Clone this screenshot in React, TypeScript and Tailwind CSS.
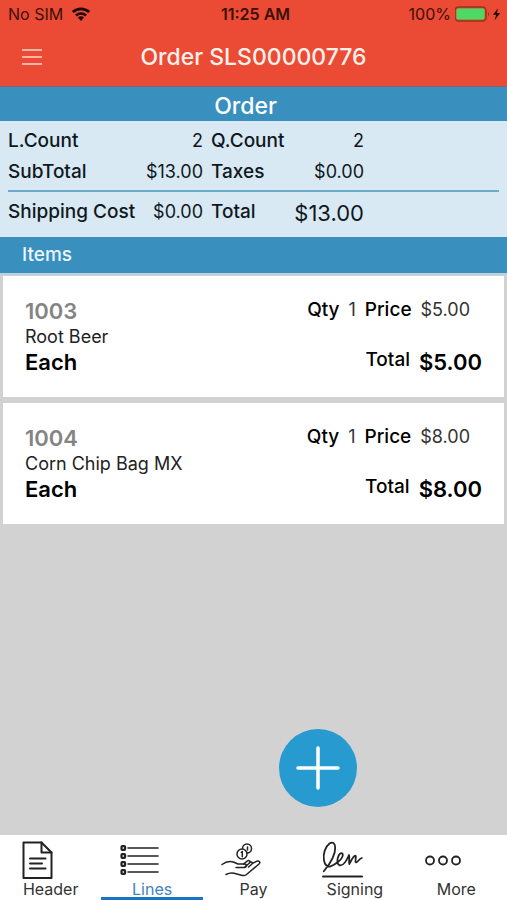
import { useState } from 'react';
import clsx from 'clsx';

const lines = [
  { code: '1003', name: 'Root Beer', unit: 'Each', qty: 1, price: 5 },
  { code: '1004', name: 'Corn Chip Bag MX', unit: 'Each', qty: 1, price: 8 },
]

const money = (value: number) => `$${value.toFixed(2)}`

function StatusBar() {
  return (
    <div className="grid h-7 grid-cols-3 items-center pl-2 pr-1 text-base text-[#3d0f0a]">
      <div className="flex items-center gap-2">
        <span>No SIM</span>
        <svg viewBox="0 0 20 15" className="h-4 w-5" fill="none" aria-hidden="true">
          <path d="M1.8 5.6a12 12 0 0 1 16.4 0" stroke="#1f0705" strokeWidth="2.7" />
          <path d="M4.9 9a7.4 7.4 0 0 1 10.2 0" stroke="#1f0705" strokeWidth="2.5" />
          <path d="M6.9 11.1a4.4 4.4 0 0 1 6.2 0L10 14.4z" fill="#1f0705" />
        </svg>
      </div>
      <span className="whitespace-nowrap text-center font-semibold">11:25 AM</span>
      <div className="flex items-center justify-end gap-1">
        <span>100%</span>
        <svg viewBox="0 0 48 18" className="h-[18px] w-12" aria-hidden="true">
          <rect x="0" y="2" width="31" height="14" rx="3.5" fill="none" stroke="#8a3a1c" strokeWidth="1.5" />
          <rect x="1.5" y="3.5" width="28" height="11" rx="2" fill="#4cd964" />
          <path d="M33 7c1.6.5 1.6 3.500 0 4z" fill="#8a3a1c" />
          <path d="M43 3.200 38 9.800h3.200l-1.600 5.400 5.600-7.200h-3.400z" fill="#1f0705" />
        </svg>
      </div>
    </div>
  )
}

function Summary() {
  return (
    <section className="bg-[#d8e9f3] px-2 pb-2 text-lg leading-[31px] text-[#10181d]">
      <dl className="grid grid-cols-[auto_68px_74px_71px] justify-start gap-x-2 pt-1">
        <dt className="w-[119px] text-[19px] font-medium">L.Count</dt>
        <dd className="text-right">2</dd>
        <dt className="text-[19px] font-medium">Q.Count</dt>
        <dd className="text-right">2</dd>
        <dt className="w-[119px] text-[19px] font-medium">SubTotal</dt>
        <dd className="text-right">$13.00</dd>
        <dt className="text-[19px] font-medium">Taxes</dt>
        <dd className="text-right">$0.00</dd>
      </dl>
      <hr className="mt-[3px] border-0 border-t-2 border-[#6cabc9]" />
      <dl className="grid grid-cols-[auto_60px_60px_85px] justify-start gap-x-2 pt-1">
        <dt className="w-[127px] whitespace-nowrap text-[19px] font-medium">Shipping Cost</dt>
        <dd className="text-right">$0.00</dd>
        <dt className="text-[19px] font-medium">Total</dt>
        <dd className="pt-0.5 text-right text-[22px]">$13.00</dd>
      </dl>
    </section>
  )
}

function LineCard({ item }: { item: any }) {
  return (
    <li className="flex h-[121px] justify-between bg-white px-[22px] pt-[21px] text-lg text-black">
      <div>
        <p className="text-[22px] font-semibold leading-7 text-[#848484]">{item.code}</p>
        <p className="leading-6 text-[#222222]">{item.name}</p>
        <p className="text-[22px] font-semibold leading-[26px]">{item.unit}</p>
      </div>
      <div className="flex flex-col items-end gap-6 leading-[26px]">
        <div className="flex gap-[9px] pr-3">
          <span className="text-[19px] font-medium">Qty</span>
          <span className="text-[#333333]">{item.qty}</span>
          <span className="text-[19px] font-medium">Price</span>
          <span className="text-[#333333]">{money(item.price)}</span>
        </div>
        <div className="flex gap-[9px]">
          <span className="text-[19px] font-medium">Total</span>
          <span className="pt-0.5 text-[22px] font-semibold">{money(item.qty * item.price)}</span>
        </div>
      </div>
    </li>
  )
}

const tabs = [
  {
    name: 'Header',
    icon: (
      <>
        <path d="M5.500 2.500h18l10 10v25.500h-28z" strokeWidth="2" />
        <path d="M23.500 2.500v10h10M12 18.500h15.500M12 23.500h12M12 28.500h15.500" strokeWidth="2" />
      </>
    ),
  },
  {
    name: 'Lines',
    icon: (
      <>
        {[8, 16, 24, 32].map((y) => (
          <g key={y}>
            <rect x="1.500" y={y - 1.8} width="3.600" height="3.600" rx="0.800" strokeWidth="2.200" />
            <path d={`M8 ${y}h30`} strokeWidth="1.600" />
          </g>
        ))}
      </>
    ),
  },
  {
    name: 'Pay',
    icon: (
      <>
        <circle cx="26" cy="8.500" r="4.500" />
        <circle cx="21" cy="14" r="5" fill="white" />
        <path d="M20.300 12.300l1-.8v5.200M26.500 7v3" />
        <path d="M1 24.500c4-3 8-4 12-2.200l4 1.700h6.500c2.500 0 2.500 3.300 0 3.500H15" />
        <path d="M24 27l5-4.500c1.500-1.200 3.200.2 2 1.500L27.500 27M22.500 24l4-3.200c1.700-.9 3.200.3 2 1.700M31 23.700l4.500-2.400c2.500-1 4.300.8 2.500 2.700L25.500 34.500c-1.300 1-2.500 1.300-4 1L13 33.300c-3-.7-5-.3-8 1.200" />
      </>
    ),
  },
  {
    name: 'Signing',
    icon: (
      <>
        <path d="M1.800 31.300C7 25 13.500 15 13.200 7.500 13 3 10.500 1.500 7.500 3.500 3 7 .8 14 2 20.500c.8 4.500 3.500 6.800 6.500 5.800C13 24.700 20.500 19.500 20.800 15c0-2.500-2.600-2.500-4.100.5-2 4-2 8.800 1.100 9.800 3.500.7 7-5 9.200-10.300.9 2.500-.4 5.500.3 9 2-3.500 3.900-8 6-8.300 1.500 0-.7 5.600.5 6.500 1.500 1 3-3.200 6-4.200" strokeWidth="1.800" />
        <path d="M1 36.500h39" strokeWidth="2" />
      </>
    ),
  },
  {
    name: 'More',
    icon: (
      <>
        <circle cx="6" cy="20.500" r="4" strokeWidth="1.800" />
        <circle cx="19" cy="20.500" r="4" strokeWidth="1.800" />
        <circle cx="32" cy="20.500" r="4" strokeWidth="1.800" />
      </>
    ),
  },
]

export default function App() {

  const [activeTab, setActiveTab] = useState('Lines')

  return (
    <div className="flex min-h-screen flex-col bg-[#d2d2d2] font-['Inter',sans-serif]">
      <header className="border-b border-[#8a6470] bg-[#eb4b34]">
        <StatusBar />
        <div className="grid h-[58px] grid-cols-[40px_1fr_40px] items-center px-3">
          <button type="button" aria-label="Menu" className="flex justify-center">
            <svg viewBox="0 0 20 18" className="h-[18px] w-5" stroke="#ffd9d0" strokeWidth="1.500" aria-hidden="true">
              <path d="M0 2h20M0 9h20M0 16h20" />
            </svg>
          </button>
          <h1 className="text-center text-[23px] font-medium text-[#fff1ec]">Order SLS00000776</h1>
        </div>
      </header>

      <h2 className="bg-[#398fbe] pr-4 pt-1 text-center text-[23px] font-medium leading-[30px] text-white">Order</h2>
      <Summary />
      <h2 className="border-b-2 border-[#b5d3e0] bg-[#398fbe] pl-[22px] text-[19px] font-medium leading-9 text-[#eaf6fc]">Items</h2>

      <main className="relative flex-1">
        <ul className="flex flex-col gap-1.5 px-[3px] pt-px">
          {lines.map((item) => (
            <LineCard key={item.code} item={item} />
          ))}
        </ul>
        <button
          type="button"
          aria-label="Add line"
          className="absolute bottom-7 right-[150px] flex size-[78px] items-center justify-center rounded-full bg-[#279bd0]"
        >
          <svg viewBox="0 0 44 44" className="size-11" stroke="white" strokeWidth="3.500" strokeLinecap="round" aria-hidden="true">
            <path d="M22 2v40M2 22h40" />
          </svg>
        </button>
      </main>

      <nav className="grid grid-cols-5 bg-white">
        {tabs.map((tab) => (
          <button
            key={tab.name}
            type="button"
            onClick={() => setActiveTab(tab.name)}
            className={clsx(
              'flex h-[65px] flex-col items-center border-b-[3px] pt-[5px] text-base leading-[18px]',
              activeTab == tab.name ? 'border-[#1a73c5] text-[#3f83bd]' : 'border-transparent text-[#333333]'
            )}
          >
            <span className="pr-6">
              <svg viewBox="0 0 41 40" className="h-10 w-[41px]" fill="none" stroke="#222222" strokeWidth="1.500" strokeLinecap="round" strokeLinejoin="round" aria-hidden="true">
                {tab.icon}
              </svg>
            </span>
            {tab.name}
          </button>
        ))}
      </nav>
    </div>
  )
}
